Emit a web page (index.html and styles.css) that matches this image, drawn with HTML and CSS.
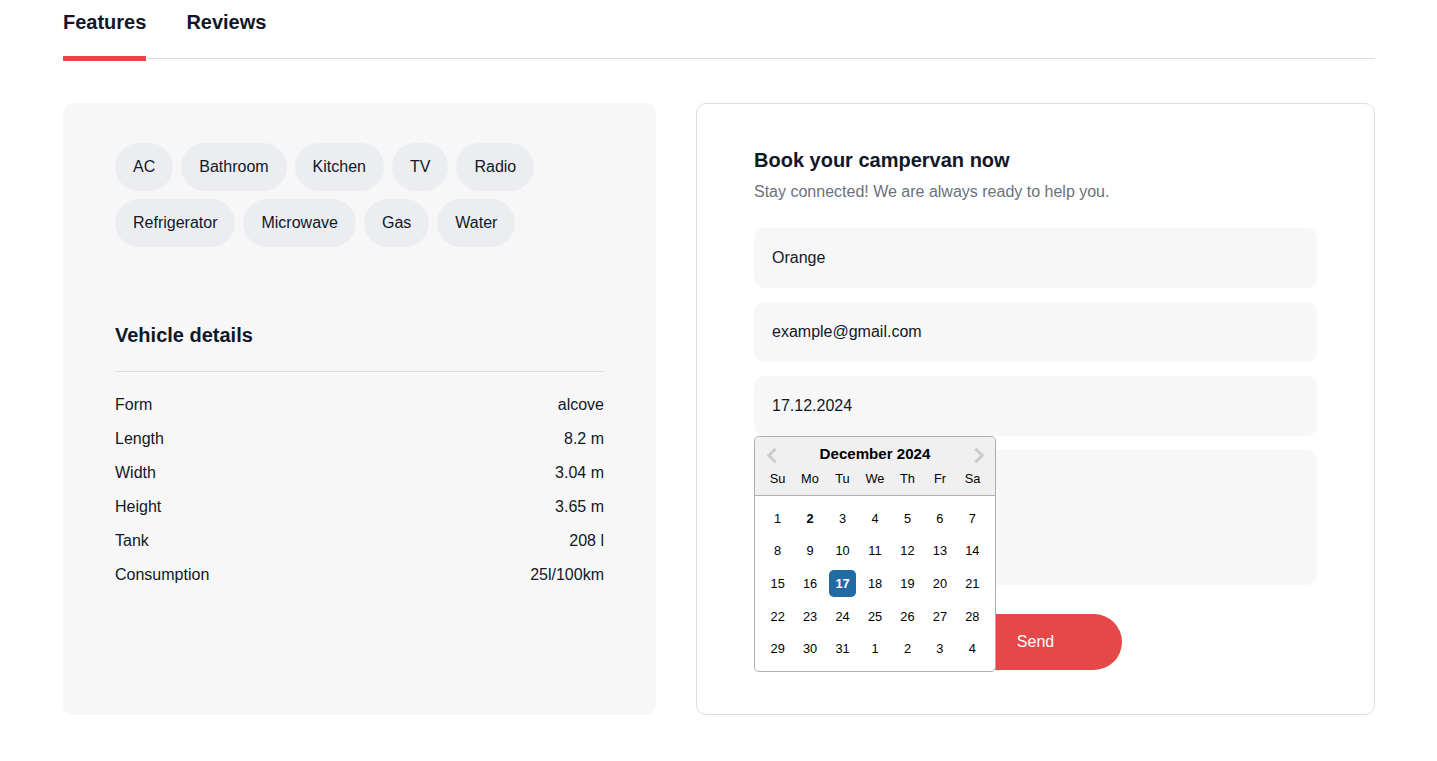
FILE: index.html
```html
<!DOCTYPE html>
<html lang="en">
<head>
<meta charset="utf-8">
<title>Campervan</title>
<link rel="stylesheet" href="styles.css">
</head>
<body>
<div class="page">
  <nav class="tabs">
    <a class="tab tab-active">Features</a>
    <a class="tab">Reviews</a>
  </nav>

  <div class="content">
    <section class="features">
      <ul class="chips">
        <li class="chip">AC</li>
        <li class="chip">Bathroom</li>
        <li class="chip">Kitchen</li>
        <li class="chip">TV</li>
        <li class="chip">Radio</li>
        <li class="chip">Refrigerator</li>
        <li class="chip">Microwave</li>
        <li class="chip">Gas</li>
        <li class="chip">Water</li>
      </ul>
      <h3 class="details-title">Vehicle details</h3>
      <ul class="details">
        <li class="detail-row"><span>Form</span><span>alcove</span></li>
        <li class="detail-row"><span>Length</span><span>8.2 m</span></li>
        <li class="detail-row"><span>Width</span><span>3.04 m</span></li>
        <li class="detail-row"><span>Height</span><span>3.65 m</span></li>
        <li class="detail-row"><span>Tank</span><span>208 l</span></li>
        <li class="detail-row"><span>Consumption</span><span>25l/100km</span></li>
      </ul>
    </section>

    <section class="booking">
      <h3 class="booking-title">Book your campervan now</h3>
      <p class="booking-sub">Stay connected! We are always ready to help you.</p>
      <form class="form">
        <input class="field" type="text" value="Orange">
        <input class="field" type="email" value="example@gmail.com">
        <div class="date-wrap">
          <input class="field" type="text" value="17.12.2024">
          <div class="dp">
            <div class="dp-header">
              <span class="dp-nav dp-prev"></span>
              <span class="dp-nav dp-next"></span>
              <div class="dp-month">December 2024</div>
              <div class="dp-row dp-names">
                <span class="dp-cell">Su</span><span class="dp-cell">Mo</span><span class="dp-cell">Tu</span><span class="dp-cell">We</span><span class="dp-cell">Th</span><span class="dp-cell">Fr</span><span class="dp-cell">Sa</span>
              </div>
            </div>
            <div class="dp-month-body">
              <div class="dp-row"><span class="dp-cell">1</span><span class="dp-cell dp-today">2</span><span class="dp-cell">3</span><span class="dp-cell">4</span><span class="dp-cell">5</span><span class="dp-cell">6</span><span class="dp-cell">7</span></div>
              <div class="dp-row"><span class="dp-cell">8</span><span class="dp-cell">9</span><span class="dp-cell">10</span><span class="dp-cell">11</span><span class="dp-cell">12</span><span class="dp-cell">13</span><span class="dp-cell">14</span></div>
              <div class="dp-row"><span class="dp-cell">15</span><span class="dp-cell">16</span><span class="dp-cell dp-selected">17</span><span class="dp-cell">18</span><span class="dp-cell">19</span><span class="dp-cell">20</span><span class="dp-cell">21</span></div>
              <div class="dp-row"><span class="dp-cell">22</span><span class="dp-cell">23</span><span class="dp-cell">24</span><span class="dp-cell">25</span><span class="dp-cell">26</span><span class="dp-cell">27</span><span class="dp-cell">28</span></div>
              <div class="dp-row"><span class="dp-cell">29</span><span class="dp-cell">30</span><span class="dp-cell">31</span><span class="dp-cell">1</span><span class="dp-cell">2</span><span class="dp-cell">3</span><span class="dp-cell">4</span></div>
            </div>
          </div>
        </div>
        <textarea class="field field-area" placeholder="Comment"></textarea>
        <button class="send" type="button">Send</button>
      </form>
    </section>
  </div>
</div>
</body>
</html>
```

FILE: styles.css
```css
* { box-sizing: border-box; }

body {
  margin: 0;
  background: #fff;
  font-family: "Liberation Sans", Arial, sans-serif;
  color: #101828;
}

ul { list-style: none; margin: 0; padding: 0; }
h3, p { margin: 0; }

.page {
  width: 1312px;
  margin-left: 63px;
  padding-top: 10px;
}

.tabs {
  display: flex;
  gap: 40px;
  border-bottom: 1px solid #dadde1;
}

.tab {
  position: relative;
  font-size: 20px;
  line-height: 24px;
  font-weight: 700;
  color: #101828;
  padding-bottom: 24px;
}

.tab-active::after {
  content: "";
  position: absolute;
  left: 0;
  right: 0;
  bottom: -3px;
  height: 5px;
  background: #e44848;
}

.content {
  display: flex;
  gap: 40px;
  margin-top: 44px;
  align-items: stretch;
}

.features {
  width: 593px;
  flex: none;
  background: #f7f7f7;
  border-radius: 10px;
  padding: 40px 52px;
}

.chips {
  display: flex;
  flex-wrap: wrap;
  gap: 8px;
  width: 440px;
}

.chip {
  background: #ecedf1;
  border-radius: 100px;
  padding: 12px 18px;
  font-size: 16px;
  line-height: 24px;
  color: #101828;
}

.details-title {
  margin-top: 76px;
  font-size: 20px;
  line-height: 24px;
  font-weight: 700;
  padding-bottom: 24px;
  border-bottom: 1px solid #dadde1;
}

.details {
  padding-top: 21px;
  display: flex;
  flex-direction: column;
  gap: 10px;
}

.detail-row {
  display: flex;
  justify-content: space-between;
  font-size: 16px;
  line-height: 24px;
  color: #101828;
}

.booking {
  flex: 1;
  border: 1px solid #dadde1;
  border-radius: 10px;
  padding: 44px 57px 44px;
}

.booking-title {
  font-size: 20px;
  line-height: 24px;
  font-weight: 700;
  color: #101828;
}

.booking-sub {
  margin-top: 8px;
  font-size: 16px;
  line-height: 24px;
  color: #6c717b;
}

.form {
  margin-top: 24px;
  display: flex;
  flex-direction: column;
  gap: 14px;
}

.field {
  display: block;
  width: 100%;
  height: 60px;
  border: none;
  outline: none;
  border-radius: 10px;
  background: #f7f7f7;
  padding: 18px;
  font-family: "Liberation Sans", Arial, sans-serif;
  font-size: 16px;
  line-height: 24px;
  color: #101828;
}

.field-area {
  height: 135px;
  resize: none;
}

.field::placeholder { color: #6c717b; }

.date-wrap { position: relative; }

.send {
  align-self: center;
  margin-top: 15px;
  width: 173px;
  height: 56px;
  border: none;
  border-radius: 200px;
  background: #e44848;
  color: #fff;
  font-family: "Liberation Sans", Arial, sans-serif;
  font-size: 16px;
  line-height: 24px;
}

/* datepicker popup */
.dp {
  position: absolute;
  top: 100%;
  left: 0;
  z-index: 5;
  width: 242px;
  background: #fff;
  border: 1px solid #aeaeae;
  border-radius: 4.8px;
  font-family: "Liberation Sans", Arial, sans-serif;
  font-size: 12.8px;
  color: #000;
}

.dp-header {
  position: relative;
  text-align: center;
  background: #f0f0f0;
  border-bottom: 1px solid #aeaeae;
  border-top-left-radius: 4.8px;
  border-top-right-radius: 4.8px;
  padding: 8px 0;
}

.dp-month {
  font-weight: 700;
  font-size: 15.1px;
  line-height: 17.4px;
}

.dp-names { margin-bottom: -8px; }

.dp-row {
  display: flex;
  justify-content: center;
}

.dp-cell {
  width: 27.2px;
  line-height: 27.2px;
  margin: 2.66px;
  text-align: center;
}

.dp-month-body { margin: 6.4px; }

.dp-today { font-weight: 700; }

.dp-selected {
  background: #216ba5;
  color: #fff;
  font-weight: 700;
  border-radius: 4.8px;
}

.dp-nav {
  position: absolute;
  top: 13px;
  width: 11px;
  height: 11px;
  border-style: solid;
  border-color: #ccc;
  border-width: 3px 3px 0 0;
}

.dp-prev { left: 14px; transform: rotate(225deg); }
.dp-next { right: 13px; transform: rotate(45deg); }
```
